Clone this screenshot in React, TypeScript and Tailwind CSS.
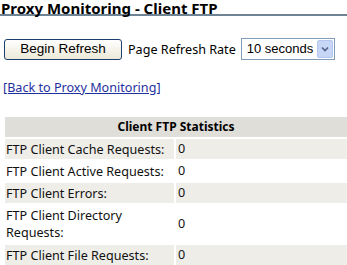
import React from "react";

const rows: { label: React.ReactNode; value: string; tall?: boolean }[] = [
  { label: "FTP Client Cache Requests:", value: "0" },
  { label: "FTP Client Active Requests:", value: "0" },
  { label: "FTP Client Errors:", value: "0" },
  { label: <>FTP Client Directory<br />Requests:</>, value: "0", tall: true },
  { label: "FTP Client File Requests:", value: "0" },
];

export default function App() {
  return (
    <div className="w-[347px] h-[265px] bg-white overflow-hidden text-[#111] font-['Noto_Sans',sans-serif]">
      <div className="h-[14px] flex items-end pl-[1px] text-[15px] font-bold text-black whitespace-nowrap">
        <span className="leading-[16px] -mb-[2px]">Proxy Monitoring - Client FTP</span>
      </div>
      <div className="h-[2px] bg-[#6e8394]" />
      <div className="flex items-center mt-[22px] pl-[4px]">
        <button className="w-[118px] h-[21px] rounded-[3px] border border-[#1d3f6e] bg-gradient-to-b from-white to-[#ece9d8] text-[13.5px] text-black font-['Liberation_Sans',sans-serif] leading-none">
          Begin Refresh
        </button>
        <span className="ml-[6px] mt-[3px] text-[12.6px] text-black">Page Refresh Rate</span>
        <div className="ml-[5px] w-[94px] h-[22px] border border-[#7f9db9] flex items-center justify-between bg-white">
          <span className="pl-[5px] text-[13px] font-['Liberation_Sans',sans-serif] text-black whitespace-nowrap">10 seconds</span>
          <span className="mr-[1px] w-[16px] h-[18px] shrink-0 bg-[#c6d6f7] border border-[#b5c7ee] rounded-[2px] flex items-center justify-center">
            <svg width="8" height="6" viewBox="0 0 8 6"><path d="M1 1.5 L4 4.5 L7 1.5" stroke="#4d6185" strokeWidth="1.6" fill="none" /></svg>
          </span>
        </div>
      </div>
      <div className="mt-[20px] pl-[3px] text-[12.6px] leading-[16px]">
        <a className="text-[#1f2f9e] underline">[Back to Proxy Monitoring]</a>
      </div>
      <div className="mt-[21px] ml-[5px] w-[342px] flex flex-col gap-[2px] text-[12.6px]">
        <div className="h-[20px] bg-[#e0ded8] flex items-center justify-center font-bold text-[12px] text-black">Client FTP Statistics</div>
        {rows.map((r, i) => (
          <div key={i} className="flex gap-[2px]">
            <div className={`w-[169px] pl-[1px] flex items-center leading-[17px] ${i % 2 === 0 ? "bg-[#eeede8]" : "bg-white"} ${r.tall ? "h-[38px]" : "h-[20px]"}`}>{r.label}</div>
            <div className={`flex-1 pl-[2px] flex items-center ${i % 2 === 0 ? "bg-[#eeede8]" : "bg-white"}`}>{r.value}</div>
          </div>
        ))}
      </div>
    </div>
  );
}
